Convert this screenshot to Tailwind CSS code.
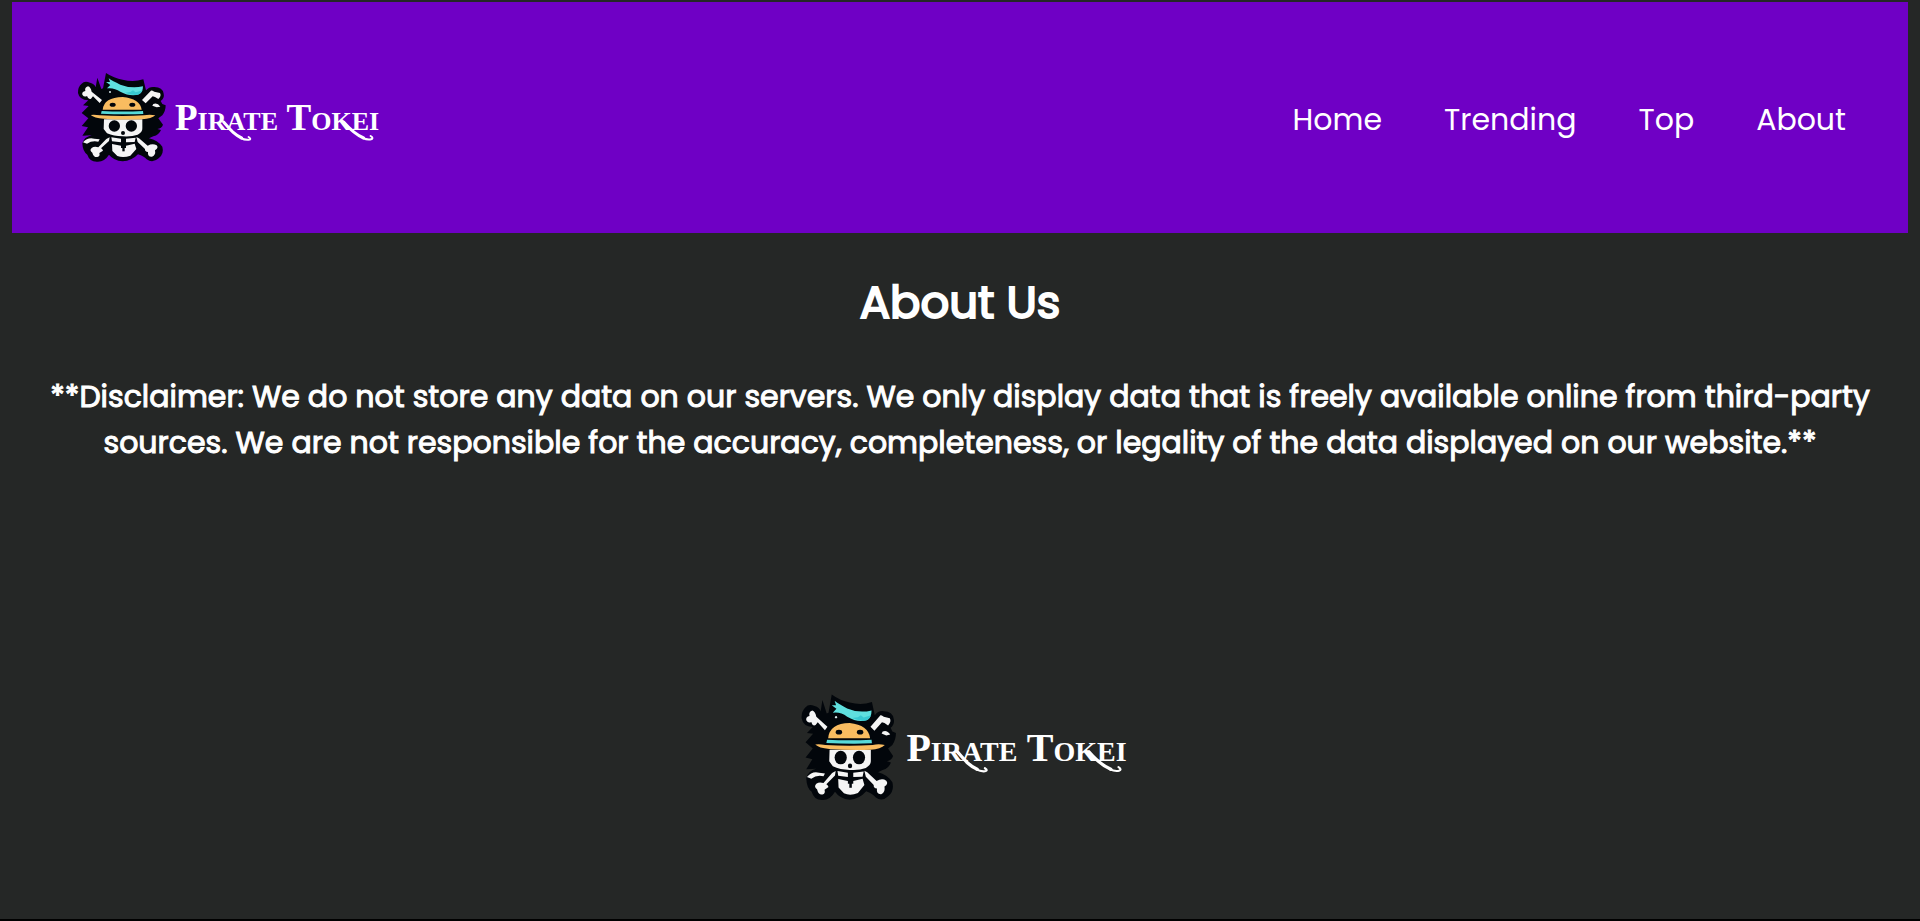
<!DOCTYPE html>
<html lang="en">
<head>
<meta charset="utf-8">
<meta name="viewport" content="width=device-width, initial-scale=1">
<title>Pirate Tokei - About</title>
<script src="https://cdn.jsdelivr.net/npm/@tailwindcss/browser@4"></script>
</head>
<body class="flex min-h-screen flex-col border-b-2 border-black bg-[#252726] pt-0.5 font-[Poppins,Inter,sans-serif] text-white">
<svg class="hidden" aria-hidden="true">
  <symbol id="skull" viewBox="0 0 315 315" preserveAspectRatio="none">
    <path fill="#02060b" d="M24 84Q23 66 35 56Q44 46 60 53Q74 56 77 67L82 38L94 72L99 70L108 24Q132 40 158 44Q190 52 220 43L228 76Q238 64 253 66Q278 66 281 86Q284 99 272 108L277 117L287 121Q287 138 277 151L265 160L279 179Q275 190 262 192L273 195Q267 210 250 214L237 220Q263 226 277 245Q283 266 266 280Q248 296 230 283Q222 274 204 268Q185 288 158 289Q131 287 117 269Q103 291 82 290Q59 291 52 269Q38 260 37 235Q42 216 65 211L37 212L54 187L35 183L55 160L35 144L56 123L39 121L55 106Q28 105 24 84Z"/>
    <path fill="#5fe0df" d="M116 40Q127 48 151 59Q184 72 219 64Q219 81 207 88Q181 96 151 80Q132 67 111 70L121 60L108 51L120 51Z"/>
    <path fill="#38c8d1" d="M181 81L189 76L197 82L218 76Q211 91 195 90Q178 88 165 83Z"/>
    <g fill="#f5f5f5">
      <path d="M65 80Q62 66 54 64Q43 67 46 78Q35 80 37 89Q43 98 51 93Q55 105 63 101L69 94L89 114L96 105Z"/>
      <path d="M216 105L242 78Q243 74 253 80L270 84Q275 93 265 102L255 96L248 94L227 115Z"/>
      <path d="M250 117Q262 112 271 125L260 127L247 122Z"/>
      <path d="M39 232Q53 216 73 221L89 223L85 230Q66 226 51 236Z"/>
      <path d="M119 217L109 222L85 247Q73 243 65 249Q57 256 67 263Q71 278 82 276Q91 275 88 264L99 257Q97 251 93 250L117 228Z"/>
      <path d="M199 216L207 220L233 242Q248 234 260 241Q267 249 255 256Q258 271 246 275Q232 276 234 261Q224 260 225 252L203 231Z"/>
      <path d="M102 163H217V190Q218 201 203 209Q184 216 158 214Q131 214 111 205L101 192Z"/>
      <path d="M124 217L153 221V232L126 229ZM168 221L197 218L194 231L168 232ZM126 237L153 242V249H168V242L194 236L199 252L181 272Q160 280 142 273L127 258Z"/>
    </g>
    <path fill="#f9bc60" d="M98 134Q102 97 158 96Q210 101 215 134Z"/>
    <path fill="#57dad9" d="M95 138Q158 141 219 138L220 147Q158 149 93 146Z"/>
    <path fill="#f9bc60" d="M62 150Q72 148 90 151Q158 155 222 151Q239 147 256 151Q245 161 216 163Q158 165 101 161Q72 159 62 150Z"/>
    <g fill="#02060b">
      <ellipse cx="128" cy="119" rx="9" ry="6"/>
      <ellipse cx="187" cy="119" rx="9" ry="6"/>
      <circle cx="133" cy="183" r="17"/>
      <circle cx="184" cy="183" r="17"/>
      <circle cx="159" cy="204" r="6"/>
      <path d="M157 233H164V259H157Z"/>
    </g>
    <circle cx="120" cy="81" r="3" fill="#d6e6e8"/>
  </symbol>
  <symbol id="flourish" viewBox="0 0 201 36">
    <g fill="none" stroke="#fff" stroke-linecap="round">
      <path stroke-width="3" d="M47 16C54 24 58 29 65 32"/>
      <path stroke-width="2" d="M64 32C70 35 77 34 72 31"/>
      <path stroke-width="3" d="M167 16C174 24 180 29 187 32"/>
      <path stroke-width="2" d="M186 32C193 35 199 33 194 30"/>
    </g>
  </symbol>
</svg>

<header class="mx-3 flex h-[231px] items-center justify-between bg-[#6f00c5] pr-[62px] pl-[58px]">
  <a href="#" class="flex items-center" aria-label="Pirate Tokei home">
    <svg class="size-[105px]" aria-hidden="true"><use href="#skull"/></svg>
    <span class="relative font-['Liberation_Serif',serif] text-[37px] leading-[40px] font-bold whitespace-nowrap [font-variant-caps:small-caps]">Pirate Tokei<svg class="absolute top-2 left-0 h-9 w-full" aria-hidden="true"><use href="#flourish"/></svg></span>
  </a>
  <nav aria-label="Main" class="flex gap-[62px] pt-1 text-[30px] leading-[46px]">
    <a href="#">Home</a>
    <a href="#">Trending</a>
    <a href="#">Top</a>
    <a href="#about">About</a>
  </nav>
</header>

<main id="about" class="px-10 pt-[34px] text-center">
  <h1 class="text-[45px] leading-[72px] font-normal [-webkit-text-stroke:2px_white]">About Us</h1>
  <p class="mt-[35px] text-[30px] leading-[46px] font-normal [-webkit-text-stroke:1px_white]">**Disclaimer: We do not store any data on our servers. We only display data that is freely available online from third-party sources. We are not responsible for the accuracy, completeness, or legality of the data displayed on our website.**</p>
</main>

<footer class="mt-auto flex justify-center pb-[109px]">
  <a href="#" class="flex items-center" aria-label="Pirate Tokei home">
    <svg class="h-[125px] w-[113px]" aria-hidden="true"><use href="#skull"/></svg>
    <span class="relative font-['Liberation_Serif',serif] text-[40px] leading-[44px] font-bold whitespace-nowrap [font-variant-caps:small-caps]">Pirate Tokei<svg class="absolute top-2 left-0 h-10 w-full" aria-hidden="true"><use href="#flourish"/></svg></span>
  </a>
</footer>
</body>
</html>
